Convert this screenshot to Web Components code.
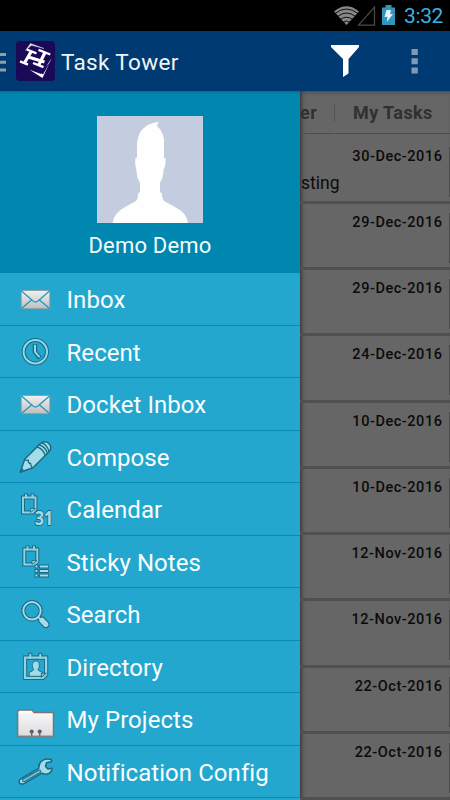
<!DOCTYPE html>
<html lang="en">
<head>
<meta charset="utf-8">
<title>Task Tower</title>
<style>
  body {
    margin: 0;
    background: #666;
    font-family: Roboto, "Noto Sans", sans-serif;
    overflow: hidden;
  }
</style>
</head>
<body>
<task-app></task-app>

<script>
const icons = {
  mail: `
    <defs><linearGradient id="g" x2="0" y2="1"><stop stop-color="#f1f1f1"/><stop offset="1" stop-color="#bfbfbf"/></linearGradient></defs>
    <rect x="6.200" y="10.500" width="28.600" height="18.200" rx="1" fill="url(#g)" stroke="#8e989b" stroke-width=".8"/>
    <path d="M6.500 11 18 21q2.500 2 5 0L34.500 11M6.500 28.500 16.500 20M34.500 28.500 24.500 20" fill="none" stroke="#2698bb" stroke-width="1.300"/>`,
  clock: `
    <circle cx="20.300" cy="19.800" r="11.700" fill="none" stroke="#176b83" stroke-width="4"/>
    <circle cx="20.300" cy="19.800" r="11.700" fill="none" stroke="#94d8e8" stroke-width="2"/>
    <path d="M20 12v8l5 6" fill="none" stroke="#176b83" stroke-width="4.500"/>
    <path d="M20 12.800v7l4.500 5.300" fill="none" stroke="#94d8e8" stroke-width="2"/>`,
  pencil: `
    <g transform="translate(0 .7)">
    <path d="M5.200 34.500 9.700 21.500 25.500 5.800Q29.500 2.500 33.500 5.500 37.500 9 34.500 13.500L18 30Z" fill="#a4dce9" stroke="#176b83" stroke-width="1.500" stroke-linejoin="round"/>
    <path d="M9.700 21.700q2 1.500 3.500.8 0 3 2.500 3.500 0 2.500 1.700 4M22 9.300q6 1.500 8.200 8.500M24.300 7.300q6 1.500 8.200 8.500M26.700 5.200q5.500 2 7.200 8.500" fill="none" stroke="#176b83" stroke-width="1.300"/>
    <path d="M5 34.500l2.300-4 1.600 1.800z" fill="#176b83"/>
    </g>`,
  calendar: `
    <path d="M8 7.500h12.500v12l-3 3H8z" fill="none" stroke="#176b83" stroke-width="4"/>
    <path d="M11 3.500v5M17.500 3.500v5" stroke="#176b83" stroke-width="4"/>
    <path d="M8 7.500h12.500v12l-3 3H8z" fill="none" stroke="#91d3e2" stroke-width="1.900"/>
    <path d="M11 4.200v4M17.500 4.200v4" stroke="#91d3e2" stroke-width="2"/>
    <path d="M15.500 22.500v-4h5z" fill="#91d3e2" stroke="#176b83" stroke-width=".8"/>
    <text x="20" y="35" textLength="18" lengthAdjust="spacingAndGlyphs" font-family="Open Sans, sans-serif" font-size="19" font-weight="700" fill="#a3dbe8" stroke="#176b83" stroke-width="1.800" paint-order="stroke">31</text>`,
  sticky: `
    <path d="M9.300 7.500h13v12l-3 3h-10z" fill="none" stroke="#176b83" stroke-width="4"/>
    <path d="M12.500 3.500v5M19 3.500v5" stroke="#176b83" stroke-width="4"/>
    <path d="M9.300 7.500h13v12l-3 3h-10z" fill="none" stroke="#91d3e2" stroke-width="1.900"/>
    <path d="M12.500 4.200v4M19 4.200v4" stroke="#91d3e2" stroke-width="2"/>
    <path d="M17 22.500v-4h5z" fill="#91d3e2" stroke="#176b83" stroke-width=".8"/>
    <path d="M19.500 24.500h4M24 24.500h10M19.500 29h4M24 29h10M19.500 33.500h4M24 33.500h10" stroke="#176b83" stroke-width="3.900"/>
    <path d="M20.400 24.500h2M24.900 24.500h8.300M20.400 29h2M24.900 29h8.300M20.400 33.500h2M24.900 33.500h8.300" stroke="#a3dbe8" stroke-width="2"/>`,
  search: `
    <g transform="translate(0 .8)">
    <circle cx="17" cy="15" r="8.700" fill="none" stroke="#176b83" stroke-width="4"/>
    <path d="M23 21l4 4" stroke="#176b83" stroke-width="4"/>
    <path d="M27 24.500l3.800 4" stroke="#176b83" stroke-width="7.500" stroke-linecap="round"/>
    <circle cx="17" cy="15" r="8.700" fill="none" stroke="#a3dbe8" stroke-width="2"/>
    <path d="M23 21l4 4" stroke="#a3dbe8" stroke-width="1.800"/>
    <path d="M27 24.500l3.800 4" stroke="#a3dbe8" stroke-width="5.300" stroke-linecap="round"/>
    </g>`,
  directory: `
    <g transform="translate(.3 .8)">
    <path d="M9.700 9.800h21.100v17l-3.200 3.300H9.700z" fill="none" stroke="#176b83" stroke-width="4.200"/>
    <path d="M15 5v6M25 5v6" stroke="#176b83" stroke-width="4"/>
    <path d="M9.700 9.800h21.100v17l-3.200 3.300H9.700z" fill="none" stroke="#91d3e2" stroke-width="2.300"/>
    <path d="M15 6v5M25 6v5" stroke="#91d3e2" stroke-width="2"/>
    <path d="M14 28.500v-4q4-1 4.500-3-1.500-1-1.500-4.500t3.500-3.700 3.500 3.700-1.500 4.500q.5 2 4.500 3v4z" fill="#a3dbe8" stroke="#176b83" stroke-width=".8"/>
    <path d="M26 29.500v-4h5z" fill="#91d3e2" stroke="#176b83"/>
    </g>`,
  folder: `
    <defs><linearGradient id="g" x2="0" y2="1"><stop stop-color="#fafafa"/><stop offset="1" stop-color="#dcdcdf"/></linearGradient></defs>
    <g transform="translate(0 2.500)">
    <path d="M2.600 9.500 4 7.500h13l2 2.500h19.500v24H2.600z" fill="url(#g)" stroke="#747678" stroke-width="1.500"/>
    <path d="M3.500 9.500h13.800" stroke="#fff" stroke-width="1.200"/>
    <path d="M16.700 29v5M24.700 29v5" stroke="#66686a" stroke-width="1.500"/>
    <path d="M4 33.700h33.500" stroke="#8a8b8d" stroke-width=".8"/>
    <circle cx="16.700" cy="29" r="2.100" fill="#606264"/><circle cx="24.700" cy="29" r="2.100" fill="#606264"/>
    </g>`,
  wrench: `
    <g transform="translate(0 3.500)">
    <path d="M5.500 23.500 23.800 12.800Q23.500 7 28 4.600 32 2.600 36.500 4.300L36.500 6.300 31.500 7.300 30.500 11 33 13.500 37.200 12.800Q36.500 17.500 32 18.500 29 19 27 17.700L9.500 27.800Q6 29.500 4.500 27.500 3.500 25 5.500 23.500Z" fill="#a3dbe8" stroke="#176b83" stroke-width="1.500" stroke-linejoin="round"/>
    <path d="M9 24.800 24.300 16" stroke="#176b83" stroke-width="3.900" stroke-linecap="round"/>
    <path d="M9 24.800 24.300 16" stroke="#72c3d9" stroke-width="1.900" stroke-linecap="round"/>
    </g>`
};

class StatusBar extends HTMLElement {
  constructor() {
    super();
    this.attachShadow({ mode: 'open' });
    this.shadowRoot.innerHTML = `
      <style>
        :host {
          display: flex;
          justify-content: flex-end;
          align-items: center;
          height: 31px;
          background: #000;
          color: #33b5e5;
          font-size: 21px;
          box-sizing: border-box;
          padding-right: 7px;
        }
        svg { display: block; }
        .time { margin-left: 8px; line-height: 31px; padding-top: 1px; letter-spacing: -0.4px; }
      </style>
      <svg width="65" height="31" viewBox="0 0 65 31">
        <path d="M3 11.500Q15.500 1 28 11.500L15.500 25Z" fill="#888"/>
        <path d="M4 13.500Q15.500 4.500 27 13.500M6.500 16.500Q15.500 9.500 24.500 16.500M9 19.500Q15.500 15 22 19.500M11.500 22.500q4-3 8 0" fill="none" stroke="#000" stroke-width=".9"/>
        <path d="M27.500 25.200h16V7z" fill="none" stroke="#4b4b4b" stroke-width="1.200"/>
        <path d="M51 7.500h3.500V5h6v2.500H64V25H51z" fill="#3196ba"/>
        <path d="M55.500 10H60l-1 4.300 3-.2L55.800 22l.7-5.300-3 .2z" fill="#e5f5fb"/>
      </svg>
      <span class="time"><slot></slot></span>
    `;
  }
}

class ActionBar extends HTMLElement {
  constructor() {
    super();
    this.attachShadow({ mode: 'open' });
    this.shadowRoot.innerHTML = `
      <style>
        :host {
          display: flex;
          align-items: center;
          height: 60px;
          background: #003a72;
          color: #f1f4f7;
          font-size: 22.5px;
        }
        svg { display: block; flex: none; }
        .logo { margin-left: 10px; }
        .title { margin-left: 6px; flex: 1; letter-spacing: 0.35px; padding-top: 2px; }
      </style>
      <svg width="6" height="60" viewBox="0 0 6 60">
        <path d="M0 23.500h6M0 31.200h6M0 39h6" stroke="#929da5" stroke-width="3"/>
      </svg>
      <svg class="logo" width="39" height="40" viewBox="0 0 39 40">
        <rect width="39" height="40" rx="4" fill="#190957"/>
        <path d="M9.500 9.500 14.500 2.500 28 7.500 15.500 4.300Z" fill="#eee" stroke="#ddd" stroke-width=".4"/>
        <path d="M35.500 17.500 26.500 37 13.500 28.800 25 33Z" fill="#fff"/>
        <path d="M34.500 20.500 27 33.500 24.500 31.500Z" fill="#190957"/>
        <path d="M10.800 8.500 20.500 12.300M4 20.300 12 23.700M22.500 8.800 34.300 13.500M17 22 27.500 26.200" fill="none" stroke="#fff" stroke-width="2.400"/>
        <path d="M15.500 10 8.500 22M29 11.500 22.500 24.500M11.500 15.800 28.500 21" fill="none" stroke="#fff" stroke-width="3.200"/>
      </svg>
      <span class="title"><slot></slot></span>
      <svg width="28" height="60" viewBox="0 0 28 60">
        <path d="M0 14h28v2L17.500 28v14.500L12 46V28L0 16z" fill="#fff"/>
      </svg>
      <svg width="91" height="60" viewBox="0 0 91 60">
        <path d="M52.500 18h6.300v6h-6.300zM52.500 27.300h6.300v6h-6.300zM52.500 36.500h6.300v6h-6.300z" fill="#8099b5"/>
      </svg>
    `;
  }
}

class DrawerItem extends HTMLElement {
  constructor() {
    super();
    this.attachShadow({ mode: 'open' });
  }

  connectedCallback() {
    this.shadowRoot.innerHTML = `
      <style>
        :host {
          display: flex;
          align-items: center;
          flex: none;
          height: 52.5px;
          box-sizing: border-box;
          padding-left: 15px;
          border-bottom: 1px solid #078bb3;
          background: #23a7ce;
          color: #f9fdff;
          font-size: 24px;
          white-space: nowrap;
        }
        svg { flex: none; width: 40px; height: 40px; margin-top: 1.5px; overflow: visible; }
        span { margin-left: 11.5px; letter-spacing: 0.06px; padding-top: 3px; }
      </style>
      <svg viewBox="0 0 40 40">${icons[this.getAttribute('icon')]}</svg>
      <span><slot></slot></span>
    `;
  }
}

class NavDrawer extends HTMLElement {
  constructor() {
    super();
    this.attachShadow({ mode: 'open' });
    this.shadowRoot.innerHTML = `
      <style>
        :host {
          display: flex;
          flex-direction: column;
          overflow: hidden;
          background: #23a7ce;
        }
        .profile {
          display: flex;
          flex-direction: column;
          align-items: center;
          flex: none;
          height: 182px;
          box-sizing: border-box;
          padding-top: 25px;
          background: #0087af;
          box-shadow: inset 0 3px 3px -2px #00668f;
          color: #f5fbfd;
          font-size: 22px;
        }
        .profile svg { display: block; }
        .name { margin-top: 10px; letter-spacing: 0.2px; }
      </style>
      <div class="profile">
        <svg width="106" height="107" viewBox="0 0 106 107">
          <rect width="106" height="107" fill="#c3cddf"/>
          <path d="M15.500 107Q17 97 28 91L39 85Q41 83 41 77.500L43 76V67Q39.500 61 39.500 54 37.500 47 38.500 42L40 41.500V27Q41 15 50 9.500 54 7 61.500 6L60 10Q66 15 67 24V42l1.500.5Q69 49 66.500 54 66.500 61 63 67v9l2 1.500Q65 83 67 85l11 6q12 6 13 16Z" fill="#fefefe"/>
        </svg>
        <span class="name"><slot name="user"></slot></span>
      </div>
      <slot></slot>
    `;
  }
}

class TaskRow extends HTMLElement {
  constructor() {
    super();
    this.attachShadow({ mode: 'open' });
    this.shadowRoot.innerHTML = `
      <style>
        :host {
          display: flex;
          flex: none;
          height: 66.25px;
          box-sizing: border-box;
          border-bottom: 3.5px solid #505050;
          padding-top: 9px;
          color: #0b0b0b;
        }
        .body { flex: 1; display: flex; flex-direction: column; padding-right: 6.5px; }
        .date {
          align-self: flex-end;
          font-size: 14.5px;
          font-weight: 500;
          line-height: 19px;
          letter-spacing: 0.55px;
        }
        .text { font-size: 17.5px; line-height: 22px; margin-top: 6px; padding-left: 1px; }
        .edge { width: 1px; height: 50px; background: #4c4c4c; }
      </style>
      <div class="body">
        <span class="date"><slot name="date"></slot></span>
        <span class="text"><slot></slot></span>
      </div>
      <div class="edge"></div>
    `;
  }
}

class TaskList extends HTMLElement {
  constructor() {
    super();
    this.attachShadow({ mode: 'open' });
    this.shadowRoot.innerHTML = `
      <style>
        :host {
          display: flex;
          flex-direction: column;
          overflow: hidden;
          background: #666;
          box-shadow: inset 6px 0 5px -5px #2b2b2b, inset 0 4px 4px -3px #444;
        }
        .tabs {
          display: flex;
          flex: none;
          height: 43px;
          margin-bottom: 3.7px;
          box-sizing: border-box;
          color: #303030;
          font-size: 18px;
          font-weight: 700;
          line-height: 43px;
          letter-spacing: 0.42px;
        }
        .tab { border-bottom: 1px solid #006884; }
        .first { width: 34px; box-sizing: border-box; }
        .last { flex: 1; margin-left: 1px; padding-left: 18px; }
        .bar { width: 1px; height: 18px; margin: 13px -1px 0 0; background: #535353; }
      </style>
      <div class="tabs">
        <span class="tab first"><slot name="left"></slot></span>
        <span class="bar"></span>
        <span class="tab last"><slot name="right"></slot></span>
      </div>
      <slot></slot>
    `;
  }
}

class TaskApp extends HTMLElement {
  constructor() {
    super();
    this.attachShadow({ mode: 'open' });

    this.menu = [
      ['mail', 'Inbox'],
      ['clock', 'Recent'],
      ['mail', 'Docket Inbox'],
      ['pencil', 'Compose'],
      ['calendar', 'Calendar'],
      ['sticky', 'Sticky Notes'],
      ['search', 'Search'],
      ['directory', 'Directory'],
      ['folder', 'My Projects'],
      ['wrench', 'Notification Config']
    ];

    this.tasks = [
      { date: '30-Dec-2016', text: 'sting' },
      { date: '29-Dec-2016' },
      { date: '29-Dec-2016' },
      { date: '24-Dec-2016' },
      { date: '10-Dec-2016' },
      { date: '10-Dec-2016' },
      { date: '12-Nov-2016' },
      { date: '12-Nov-2016' },
      { date: '22-Oct-2016' },
      { date: '22-Oct-2016' }
    ];
  }

  connectedCallback() {
    this.shadowRoot.innerHTML = `
      <style>
        :host {
          display: flex;
          flex-direction: column;
          height: 800px;
          overflow: hidden;
        }
        .content {
          display: grid;
          grid-template-columns: 300px 1fr;
          flex: 1;
          min-height: 0;
        }
      </style>
      <status-bar>3:32</status-bar>
      <action-bar>Task Tower</action-bar>
      <div class="content">
        <nav-drawer>
          <span slot="user">Demo Demo</span>
          ${this.menu.map(([icon, label]) => `<drawer-item icon="${icon}">${label}</drawer-item>`).join('')}
        </nav-drawer>
        <task-list>
          <span slot="left">er</span>
          <span slot="right">My Tasks</span>
          ${this.tasks.map(task => `
            <task-row><span slot="date">${task.date}</span>${task.text || ''}</task-row>
          `).join('')}
        </task-list>
      </div>
    `;
  }
}

customElements.define('status-bar', StatusBar);
customElements.define('action-bar', ActionBar);
customElements.define('drawer-item', DrawerItem);
customElements.define('nav-drawer', NavDrawer);
customElements.define('task-row', TaskRow);
customElements.define('task-list', TaskList);
customElements.define('task-app', TaskApp);
</script>
</body>
</html>
